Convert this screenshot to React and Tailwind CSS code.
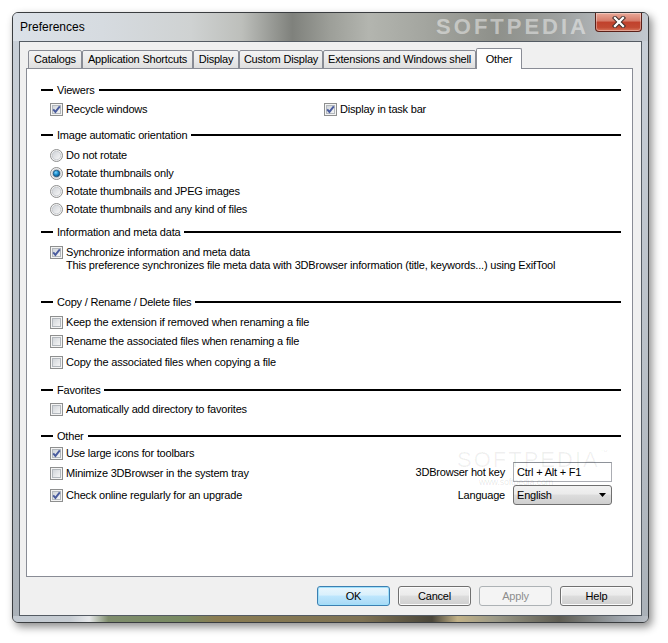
import React from "react";

const Check = ({ checked }) => (
  <svg width="13" height="13" viewBox="0 0 13 13" className="shrink-0">
    <defs>
      <linearGradient id="cbg" x1="0" y1="0" x2="1" y2="1">
        <stop offset="0" stopColor="#cfd3d8" />
        <stop offset="1" stopColor="#f7f7f7" />
      </linearGradient>
    </defs>
    <rect x="0.5" y="0.5" width="12" height="12" fill="#f4f4f4" stroke="#8e8f8f" />
    <rect x="2.5" y="2.5" width="8" height="8" fill="url(#cbg)" stroke="#b3b8bd" />
    {checked && (
      <path d="M3.2 6.4 L5.4 8.9 L9.8 3.3" fill="none" stroke="#4a5c9e" strokeWidth="1.9" />
    )}
  </svg>
);

const Radio = ({ checked }) => (
  <svg width="13" height="13" viewBox="0 0 13 13" className="shrink-0">
    <defs>
      <linearGradient id="rbg" x1="0" y1="0" x2="1" y2="1">
        <stop offset="0" stopColor="#cdd1d6" />
        <stop offset="1" stopColor="#f8f8f8" />
      </linearGradient>
      <radialGradient id="rdot" cx="0.4" cy="0.35" r="0.7">
        <stop offset="0" stopColor="#7fd6ff" />
        <stop offset="0.5" stopColor="#1a8ccc" />
        <stop offset="1" stopColor="#0b4a7a" />
      </radialGradient>
    </defs>
    <circle cx="6.5" cy="6.5" r="6" fill="#f4f4f4" stroke="#8e8f8f" />
    <circle cx="6.5" cy="6.5" r="4.3" fill="url(#rbg)" stroke="#bfc3c8" strokeWidth="0.8" />
    {checked && <circle cx="6.5" cy="6.5" r="3.3" fill="url(#rdot)" stroke="#1d4a70" strokeWidth="0.7" />}
  </svg>
);

const Header = ({ title, h = "h-[20px]", className = "" }) => (
  <div className={"flex items-center ml-[14px] mr-[11px] " + h + " " + className}>
    <div className="w-[12px] h-[2px] bg-black" />
    <span className="px-[4px] leading-none">{title}</span>
    <div className="flex-1 h-[2px] bg-black" />
  </div>
);

const CheckRow = ({ checked, label, h = "h-[18px]", className = "" }) => (
  <div className={"flex items-center " + h + " " + className}>
    <Check checked={checked} />
    <span className="ml-[3px] whitespace-nowrap">{label}</span>
  </div>
);

const RadioRow = ({ checked, label }) => (
  <div className="flex items-center h-[18px] ml-[23px]">
    <Radio checked={checked} />
    <span className="ml-[3px] whitespace-nowrap">{label}</span>
  </div>
);

const Tab = ({ label, w }) => (
  <div
    className={
      "h-[19px] flex items-center justify-center border border-[#898c95] rounded-t-[2px] bg-[linear-gradient(180deg,#f3f3f3_0%,#ebebeb_50%,#dedede_100%)] whitespace-nowrap " +
      w
    }
  >
    {label}
  </div>
);

const Button = ({ children, variant }) => {
  let cls =
    "w-[73px] h-[20px] flex items-center justify-center rounded-[3px] border ";
  if (variant === "default")
    cls +=
      "border-[#3c7fb1] bg-[linear-gradient(180deg,#eaf6fd_0%,#d9f0fc_45%,#bee6fd_50%,#a7d9f5_100%)] shadow-[inset_0_0_0_1px_#9fe0fb] text-black";
  else if (variant === "disabled")
    cls += "border-[#adb2b5] bg-[#f4f4f4] text-[#8d8d8d]";
  else
    cls +=
      "border-[#707070] bg-[linear-gradient(180deg,#f2f2f2_0%,#ebebeb_45%,#dddddd_50%,#cfcfcf_100%)] shadow-[inset_0_0_0_1px_#fbfbfb] text-black";
  return <div className={cls}>{children}</div>;
};

export default function App() {
  return (
    <div className="w-[668px] h-[643px] bg-white pt-[12px] pl-[12px] font-['Liberation_Sans',Arial,sans-serif] text-[11px] text-black tracking-[-0.2px]">
      <div className="w-[637px] h-[611px] rounded-[6px] border border-[#3a3d40] bg-[linear-gradient(180deg,#c9d0d8_0%,#b9c0c7_60%,#aab1b8_100%)] shadow-[3px_4px_9px_rgba(0,0,0,0.45)] flex flex-col overflow-hidden">
        {/* Title bar */}
        <div className="h-[28px] flex items-start bg-[linear-gradient(90deg,#dbe1e8_0%,#d6dbe0_14%,#cfd2d2_28%,#bdbfbb_36%,#7f817c_44%,#9d9f99_50%,#b3b5af_56%,#a5a7a1_64%,#8e908a_76%,#9ea1a0_86%,#c3c9d0_100%)]">
          <div className="h-[28px] flex items-center pl-[7px] text-[12px] tracking-normal text-black">
            Preferences
          </div>
          <div className="flex-1" />
          <div className="h-[28px] flex items-center mr-[6px]">
            <span className="text-[22px] font-bold tracking-[3px] text-white/45 leading-none">
              SOFTPEDIA
            </span>
          </div>
          <div className="w-[47px] h-[19px] mr-[6px] rounded-b-[4px] border border-t-0 border-[#5a1f18] bg-[linear-gradient(180deg,#e9a999_0%,#d57a68_45%,#c1412c_50%,#c24a33_80%,#d9765c_100%)] shadow-[inset_0_0_0_1px_rgba(255,255,255,0.35)] flex items-center justify-center">
            <svg width="14" height="12" viewBox="0 0 14 12">
              <path d="M3 2 L11 10 M11 2 L3 10" stroke="#3a2a28" strokeWidth="4.2" strokeLinecap="square" />
              <path d="M3 2 L11 10 M11 2 L3 10" stroke="#ffffff" strokeWidth="2.3" strokeLinecap="square" />
            </svg>
          </div>
        </div>

        {/* Client area */}
        <div className="mx-[6px] h-[575px] border border-[#545b63] bg-[#f0f0f0] flex flex-col">
          <div className="ml-[6px] w-[607px] flex flex-col">
            {/* Tabs */}
            <div className="mt-[6px] h-[21px] flex items-end ml-[2px] -mb-px relative z-10">
              <Tab label="Catalogs" w="w-[54px]" />
              <Tab label="Application Shortcuts" w="w-[111px]" />
              <Tab label="Display" w="w-[46px]" />
              <Tab label="Custom Display" w="w-[84px]" />
              <Tab label="Extensions and Windows shell" w="w-[153px]" />
              <div className="w-[46px] h-[21px] flex items-start pt-[2px] justify-center border border-b-0 border-[#898c95] rounded-t-[2px] bg-white">
                Other
              </div>
            </div>

            {/* Panel */}
            <div className="relative h-[509px] border border-[#898c95] bg-white flex flex-col">
              <Header title="Viewers" className="mt-[11px]" />
              <div className="flex ml-[23px]">
                <CheckRow checked label="Recycle windows" className="w-[274px]" />
                <CheckRow checked label="Display in task bar" />
              </div>

              <Header title="Image automatic orientation" className="mt-[7px]" />
              <div className="mt-[1px] flex flex-col">
                <RadioRow label="Do not rotate" />
                <RadioRow checked label="Rotate thumbnails only" />
                <RadioRow label="Rotate thumbnails and JPEG images" />
                <RadioRow label="Rotate thumbnails and any kind of files" />
              </div>

              <Header title="Information and meta data" className="mt-[4px]" />
              <div className="mt-[4px] ml-[23px] flex items-start">
                <div className="mt-[0px]">
                  <Check checked />
                </div>
                <div className="ml-[3px] leading-[13px] whitespace-nowrap">
                  <div>Synchronize information and meta data</div>
                  <div>
                    This preference synchronizes file meta data with 3DBrowser information (title, keywords...) using ExifTool
                  </div>
                </div>
              </div>

              <Header title="Copy / Rename / Delete files" className="mt-[20px]" />
              <CheckRow label="Keep the extension if removed when renaming a file" className="mt-[1px] ml-[23px]" />
              <CheckRow label="Rename the associated files when renaming a file" className="mt-[1px] ml-[23px]" />
              <CheckRow label="Copy the associated files when copying a file" className="mt-[3px] ml-[23px]" />

              <Header title="Favorites" className="mt-[9px]" />
              <CheckRow label="Automatically add directory to favorites" className="ml-[23px]" />

              <Header title="Other" h="h-[18px]" className="mt-[9px]" />
              <div className="flex">
                <div className="ml-[23px] flex-1 flex flex-col">
                  <CheckRow checked label="Use large icons for toolbars" h="h-[16px]" />
                  <CheckRow label="Minimize 3DBrowser in the system tray" h="h-[16px]" className="mt-[4px]" />
                  <CheckRow checked label="Check online regularly for an upgrade" h="h-[16px]" className="mt-[6px]" />
                </div>
                <div className="mt-[17px] mr-[20px] flex flex-col items-end gap-[3px]">
                  <div className="flex items-center">
                    <span>3DBrowser hot key</span>
                    <div className="ml-[8px] w-[99px] h-[20px] border border-[#abadb3] border-t-[#8e9299] bg-white flex items-center pl-[3px]">
                      Ctrl + Alt + F1
                    </div>
                  </div>
                  <div className="flex items-center">
                    <span>Language</span>
                    <div className="ml-[8px] w-[99px] h-[20px] rounded-[3px] border border-[#707070] bg-[linear-gradient(180deg,#f2f2f2_0%,#ebebeb_45%,#dddddd_50%,#cfcfcf_100%)] flex items-center pl-[3px] pr-[5px]">
                      <span className="flex-1">English</span>
                      <svg width="7" height="4" viewBox="0 0 7 4">
                        <path d="M0 0 H7 L3.5 4 Z" fill="#000" />
                      </svg>
                    </div>
                  </div>
                </div>
              </div>

              {/* watermark */}
              <div className="absolute left-[430px] top-[380px] text-[22px] tracking-[2px] text-black/[0.06] leading-none pointer-events-none">
                SOFTPEDIA<span className="text-[8px] align-top">™</span>
              </div>
              <div className="absolute left-[452px] top-[409px] text-[9px] text-black/[0.1] leading-none pointer-events-none">
                www.softpedia.com
              </div>
            </div>

            {/* Buttons */}
            <div className="mt-[9px] flex justify-end gap-[8px]">
              <Button variant="default">OK</Button>
              <Button>Cancel</Button>
              <Button variant="disabled">Apply</Button>
              <Button>Help</Button>
            </div>
          </div>
        </div>

        {/* bottom frame strip */}
        <div className="flex-1 bg-[linear-gradient(90deg,#c3cad2_0%,#c6ccd2_9%,#e6e8ea_12%,#7f8d6d_15%,#788a62_27%,#8a7c52_32%,#7e7254_55%,#4a463a_66%,#c2b288_70%,#9c9a88_76%,#5e5c52_86%,#9aa0a6_95%,#b8bec5_100%)]" />
      </div>
    </div>
  );
}
